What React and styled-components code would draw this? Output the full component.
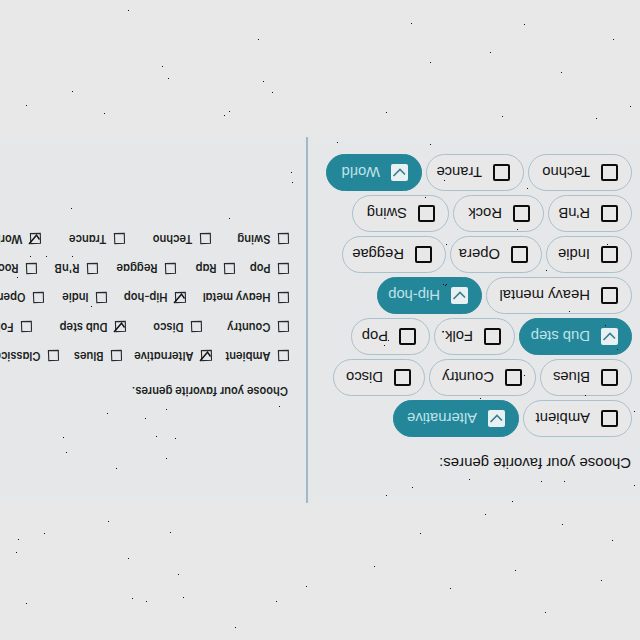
import React from 'react';
import styled, { createGlobalStyle } from 'styled-components';

const GlobalStyle = createGlobalStyle`
  * { box-sizing: border-box; }
  body { margin: 0; background: #e8e8e8; }
`;

const Page = styled.main`
  width: 640px;
  height: 640px;
  padding: 137px 0;
  overflow: hidden;
  background: #e8e8e8;
  transform: rotate(180deg);
`;

const Band = styled.div`
  display: flex;
  width: 640px;
  height: 366px;
  background: #e5e7e9;
`;

const ChipPanel = styled.section`
  width: 332px;
  flex: none;
  padding: 31px 0 0 8px;
  font-family: "Liberation Sans", Arial, sans-serif;
  font-size: 14.8px;
  color: #141414;
`;

const ChipTitle = styled.h2`
  margin: 0 0 17px 1px;
  height: 18px;
  font-size: 14.95px;
  font-weight: 400;
  line-height: 18px;
`;

const ChipRows = styled.div`
  display: flex;
  flex-direction: column;
  gap: 4px;
`;

const ChipRow = styled.div`
  display: flex;
  gap: 4px;
`;

const Chip = styled.label`
  display: flex;
  align-items: center;
  flex: none;
  gap: 11px;
  width: ${(p) => p.$w}px;
  height: 37px;
  padding-left: 13px;
  border: 1px solid ${(p) => (p.$on ? '#238799' : '#a9c0cd')};
  border-radius: 19px;
  background: ${(p) => (p.$on ? '#238799' : '#e8e8e9')};
  color: ${(p) => (p.$on ? '#c0e2e9' : '#141414')};
  white-space: nowrap;
  line-height: 18px;
`;

const ChipBox = styled.span`
  display: flex;
  flex: none;
  width: 17px;
  height: 17px;
  border: ${(p) => (p.$on ? '0' : '2px solid #0c0c0c')};
  border-radius: 2px;
  background: ${(p) => (p.$on ? '#e8f0f2' : 'transparent')};
`;

const Divider = styled.div`
  flex: none;
  width: 2px;
  background: #9fb9c6;
`;

const PlainPanel = styled.section`
  width: 306px;
  flex: none;
  overflow: hidden;
  padding: 104px 0 0 17px;
  font-family: Inter, sans-serif;
  font-size: 11.1px;
  font-weight: 600;
  font-feature-settings: "cv11";
  color: #1c1e20;
`;

const PlainTitle = styled.h2`
  margin: 0 0 19px 1px;
  height: 16px;
  font-size: 11.1px;
  font-weight: 600;
  line-height: 16px;
`;

const PlainRows = styled.div`
  display: flex;
  flex-direction: column;
  gap: 13.25px;
`;

const PlainRow = styled.div`
  display: flex;
`;

const PlainItem = styled.label`
  display: flex;
  align-items: center;
  flex: none;
  gap: 7.5px;
  width: ${(p) => p.$w}px;
  height: 16px;
  line-height: 16px;
  white-space: nowrap;
`;

const SketchSvg = styled.svg`
  flex: none;
  overflow: visible;
`;

const Specks = styled.svg`
  position: absolute;
  top: 0;
  left: 0;
  pointer-events: none;
`;

const chips = [
  [['Ambient', 109], ['Alternative', 126, true]],
  [['Blues', 92], ['Country', 107], ['Disco', 92]],
  [['Dub step', 113, true], ['Folk.', 81], ['Pop', 79]],
  [['Heavy mental', 146], ['Hip-hop', 105, true]],
  [['Indie', 86], ['Opera', 92], ['Reggae', 104]],
  [["R'nB", 84], ['Rock', 91], ['Swing', 97]],
  [['Techno', 104], ['Trance', 98], ['World', 96, true]],
];

const plain = [
  [['Ambient', 77], ['Alternative', 90, true], ['Blues', 63], ['Classical', 90]],
  [['Country', 87], ['Disco', 76], ['Dub step', 94, true], ['Folk', 60]],
  [['Heavy metal', 103], ['Hip-hop', 79, true], ['Indie', 63], ['Opera', 70]],
  [['Pop', 54], ['Rap', 59], ['Reggae', 78], ["R'nB", 61], ['Rock', 60]],
  [['Swing', 78], ['Techno', 86], ['Trance', 84], ['World', 70, true]],
];

const specks = [
  [128, 10], [258, 39], [162, 66], [168, 78], [263, 81], [272, 92], [72, 91], [26, 105], [104, 113],
  [229, 111], [224, 115], [291, 172], [292, 182], [71, 208], [229, 218], [337, 142],
  [107, 413], [145, 418], [166, 409], [279, 406], [156, 436], [175, 438], [63, 437], [66, 452],
  [166, 458], [116, 468], [108, 521], [44, 533], [18, 539], [16, 552], [170, 532], [128, 558],
  [178, 574], [132, 598], [146, 601], [183, 597], [26, 603], [276, 601], [306, 586], [235, 627],
  [386, 495], [412, 487], [469, 479], [512, 501], [541, 481], [564, 481], [634, 485], [634, 411],
  [430, 144], [444, 180], [425, 197], [446, 244], [527, 188], [517, 229], [607, 244], [546, 270],
  [443, 284], [446, 284], [445, 285], [569, 311], [605, 325], [617, 349], [524, 375], [585, 395],
  [480, 398], [384, 340], [388, 340], [384, 345], [443, 331], [30, 256], [46, 256], [72, 256],
  [17, 277], [91, 306], [386, 112],
  [411, 23], [490, 52], [524, 24], [613, 39], [561, 72], [630, 106], [596, 118], [502, 116], [430, 62],
  [420, 533], [485, 514], [562, 524], [612, 540], [450, 588], [374, 566], [545, 612], [601, 580], [515, 570],
];

function PlainBox({ on }) {
  return (
    <SketchSvg width="11" height="11" viewBox="0 0 11 11" fill="none" stroke="#252a2d">
      <path d="M.5.7 10.2.4 10.6 10.4.7 10.6Z" strokeWidth="1.1" />
      {on && <path d="M1.5 4.5 4.5 8.8 12 0" stroke="#111" strokeWidth="1.4" />}
    </SketchSvg>
  );
}

function Check() {
  return (
    <svg width="17" height="17" viewBox="0 0 17 17" fill="none" stroke="#397f91" strokeWidth="1.6">
      <path d="M3 6.5 8 11.5 14.5 5" />
    </svg>
  );
}

export default function App() {
  return (
    <>
      <GlobalStyle />
      <Page>
        <Band>
          <ChipPanel>
            <ChipTitle>Choose your favorite genres:</ChipTitle>
            <ChipRows>
              {chips.map((row, i) => (
                <ChipRow key={i}>
                  {row.map(([name, w, on]) => (
                    <Chip key={name} $w={w} $on={on}>
                      <ChipBox $on={on}>{on && <Check />}</ChipBox>
                      {name}
                    </Chip>
                  ))}
                </ChipRow>
              ))}
            </ChipRows>
          </ChipPanel>
          <Divider />
          <PlainPanel>
            <PlainTitle>Choose your favorite genres.</PlainTitle>
            <PlainRows>
              {plain.map((row, i) => (
                <PlainRow key={i}>
                  {row.map(([name, w, on]) => (
                    <PlainItem key={name} $w={w}>
                      <PlainBox on={on} />
                      {name}
                    </PlainItem>
                  ))}
                </PlainRow>
              ))}
            </PlainRows>
          </PlainPanel>
        </Band>
      </Page>
      <Specks width="640" height="640" fill="#111" shapeRendering="crispEdges">
        {specks.map(([x, y], i) => (
          <rect key={i} x={x} y={y} width="1" height="1" />
        ))}
      </Specks>
    </>
  );
}
